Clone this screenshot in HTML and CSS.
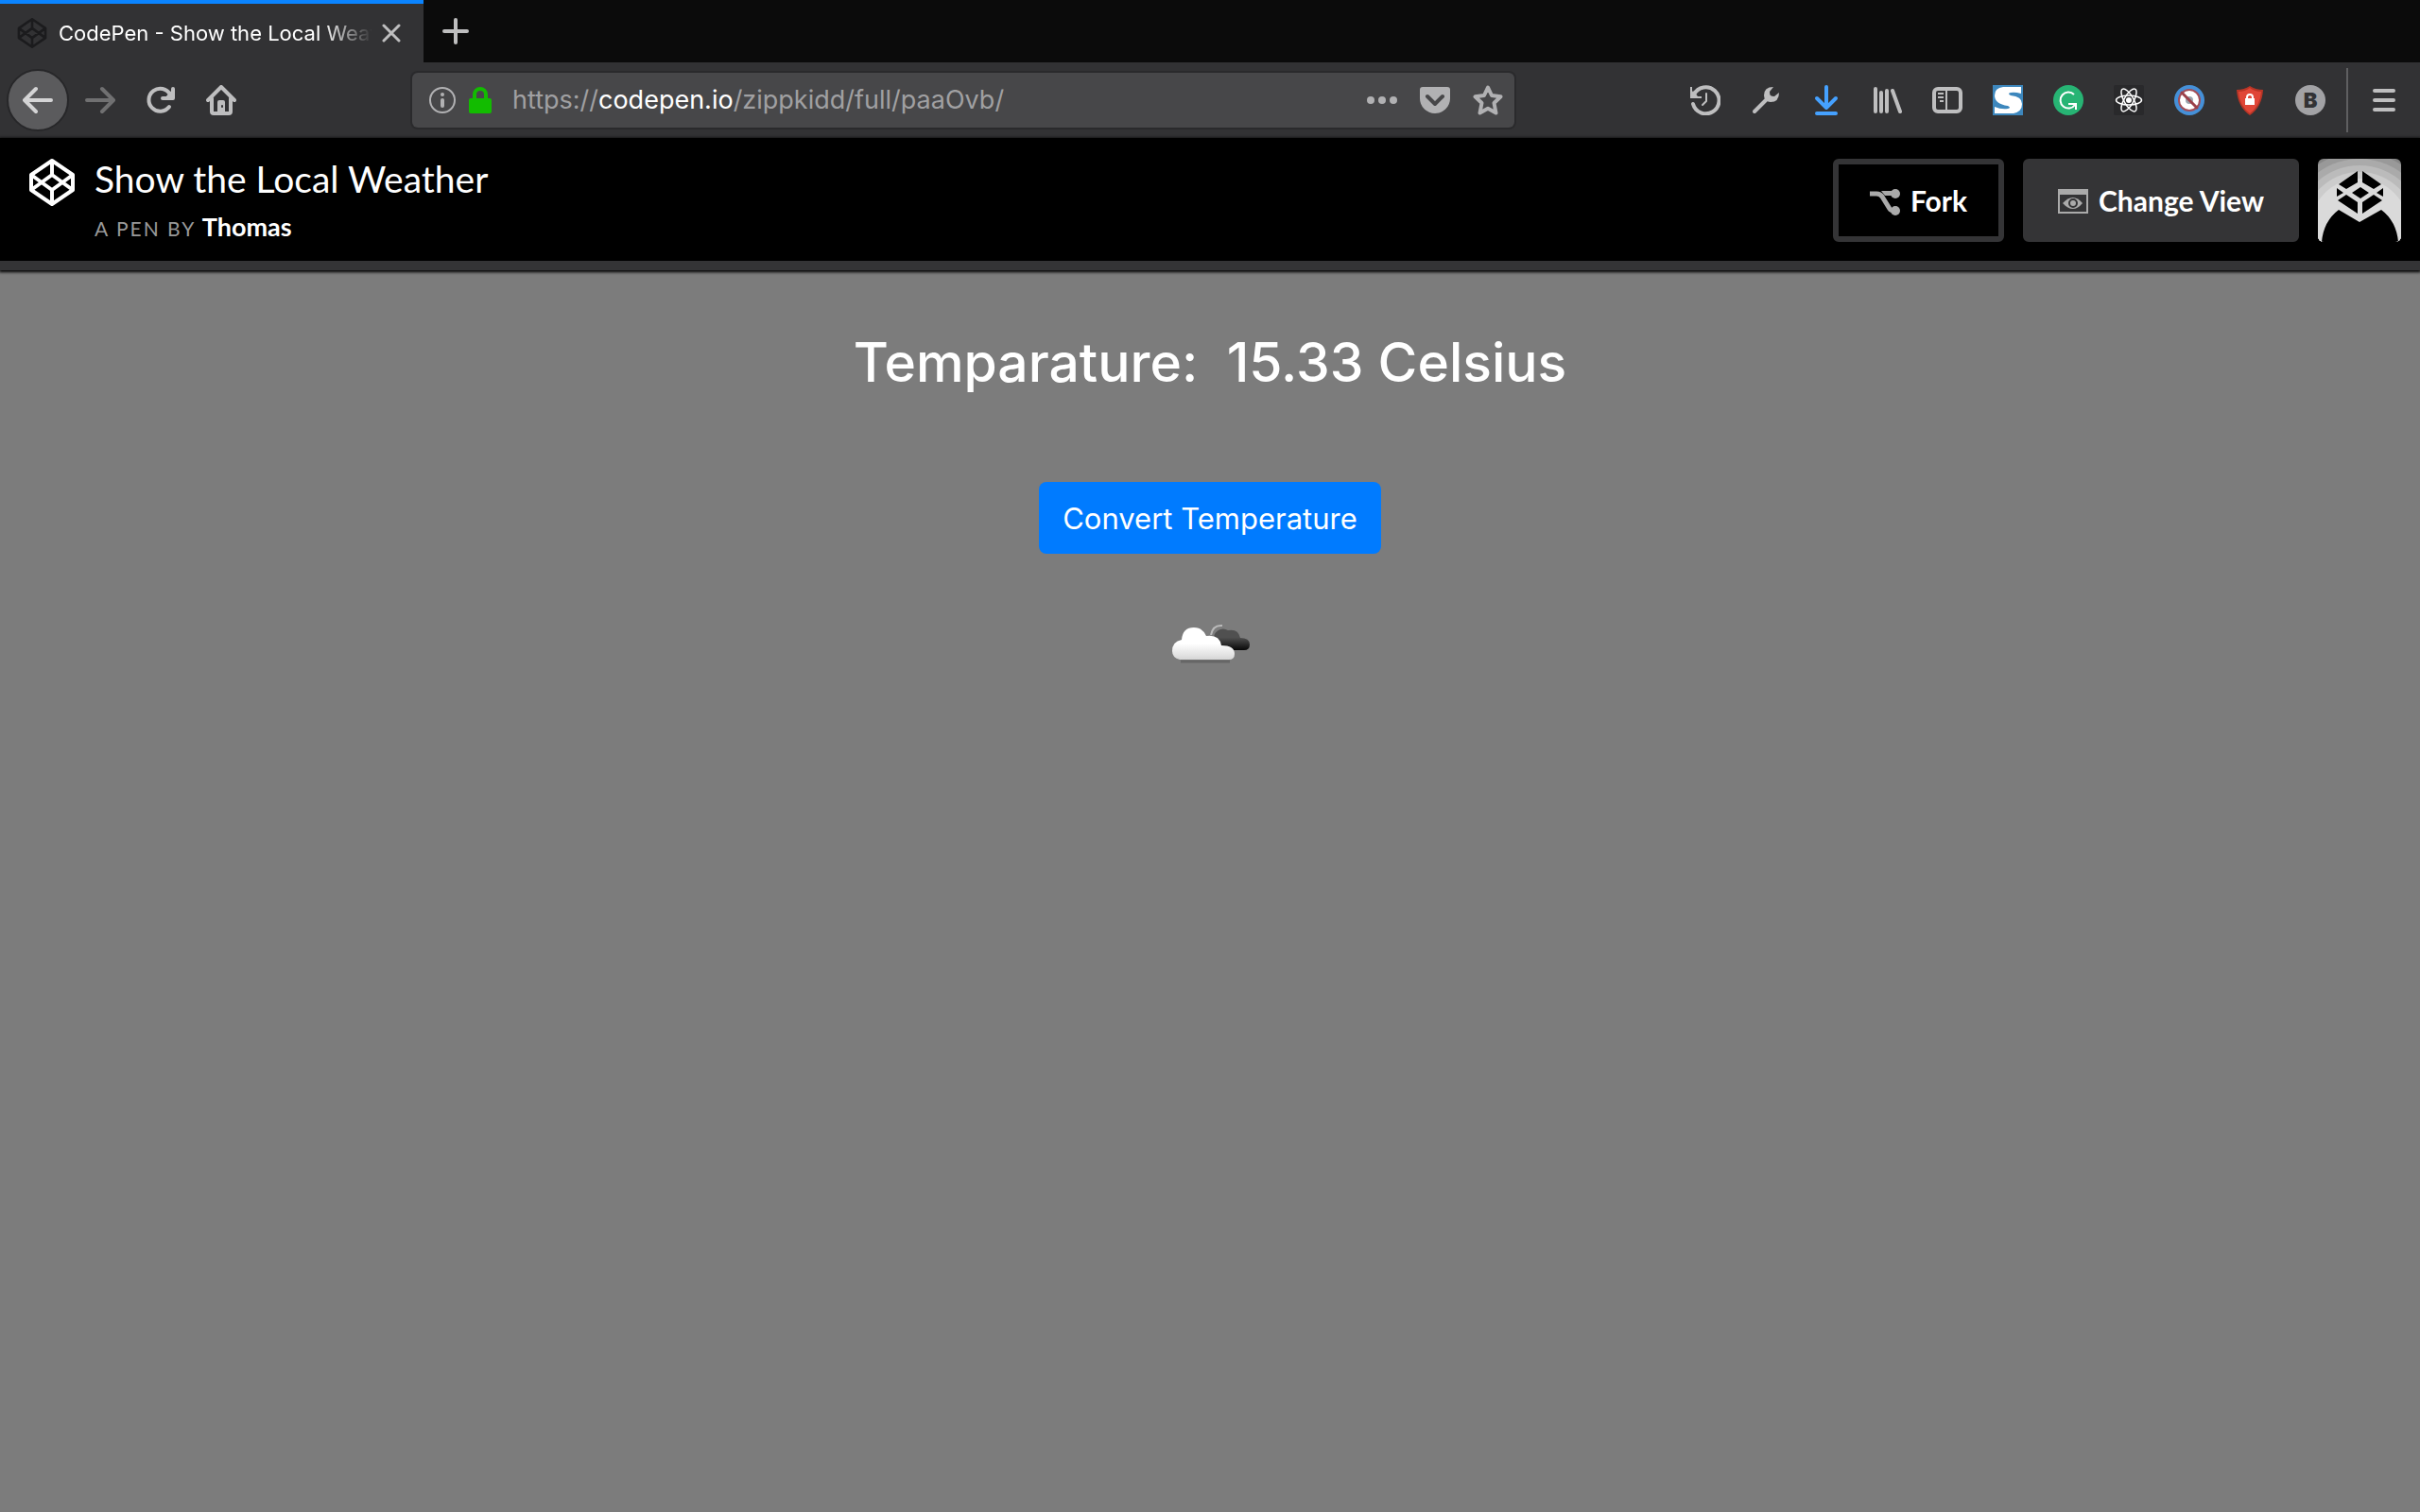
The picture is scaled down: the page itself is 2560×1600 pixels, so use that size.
FILE: index.html
```html
<!DOCTYPE html>
<html lang="en">
<head>
<meta charset="utf-8">
<title>CodePen - Show the Local Weather</title>
<link rel="stylesheet" href="styles.css">
</head>
<body>
<div class="tabs">
  <div class="tab">
    <svg class="icon favicon" viewBox="0 0 48 50"><use href="#codepen"/></svg>
    <span class="tab-title">CodePen - Show the Local Weather</span>
    <button class="plain tab-close" aria-label="Close tab"><svg class="glyph" viewBox="0 0 20 20"><path d="M2 2l16 16M18 2L2 18" stroke-width="3"/></svg></button>
  </div>
  <button class="plain new-tab" aria-label="New tab"><svg class="glyph" viewBox="0 0 28 28"><path d="M14 2v24M2 14h24" stroke-width="4"/></svg></button>
</div>

<nav class="toolbar">
  <div class="nav-buttons">
    <button class="plain back" aria-label="Back"><svg class="icon" viewBox="0 0 32 32"><path d="M30 16H3M14 4L2 16l12 12" stroke-width="4"/></svg></button>
    <button class="plain forward" aria-label="Forward"><svg class="icon" viewBox="0 0 32 32"><path d="M2 16h27M18 4l12 12-12 12" stroke-width="4"/></svg></button>
    <button class="plain" aria-label="Reload"><svg class="icon" viewBox="0 0 32 32"><path d="M25 23a12 12 0 1 1 1-13" stroke-width="4"/><path d="M29 4v10H18" stroke-width="4"/><path class="solid" d="M30 3v12H19z"/></svg></button>
    <button class="plain" aria-label="Home"><svg class="icon" viewBox="0 0 32 32"><path d="M2 16L16 2l14 14M6 14v14q0 2 2 2h16q2 0 2-2V14" stroke-width="4"/><path class="solid" d="M12 30V18q0-2 2-2h4q2 0 2 2v12z"/><path d="M17 22v1" stroke="#323234" stroke-width="2"/></svg></button>
  </div>
  <div class="space"></div>
  <div class="address">
    <svg class="icon info" viewBox="0 0 28 28"><circle cx="14" cy="14" r="13" stroke-width="2"/><path d="M14 14v6" stroke-width="4"/><circle class="solid" cx="14" cy="8" r="2"/></svg>
    <svg class="lock" viewBox="0 0 24 28"><path d="M6 13V8a6 6 0 0 1 12 0v5" fill="none" stroke="#12bc00" stroke-width="4"/><rect y="12" width="24" height="16" rx="2" fill="#12bc00"/></svg>
    <div class="url" role="textbox" aria-label="Address" contenteditable="true" spellcheck="false">https://<span class="host">codepen.io</span>/zippkidd/full/paaOvb/</div>
    <div class="address-actions">
      <svg class="icon" viewBox="0 0 32 32"><g class="solid"><circle cx="4" cy="16" r="4"/><circle cx="16" cy="16" r="4"/><circle cx="28" cy="16" r="4"/></g></svg>
      <svg class="icon" viewBox="0 0 32 32"><path class="solid" d="M3 2h26q3 0 3 3v9a16 16 0 0 1-32 0V5q0-3 3-3z"/><path d="M8 12l8 8 8-8" stroke="#474749" stroke-width="4"/></svg>
      <svg class="icon" viewBox="0 0 32 32"><path d="M16 2.5l4 8.5 9.500 1.300-7 6.700 2 10.500-8.500-4.700-8.500 4.700 2-10.500-7-6.700 9.500-1.300z" stroke-width="4"/></svg>
    </div>
  </div>
  <div class="space"></div>
  <div class="tools">
    <svg class="icon" viewBox="0 0 32 32"><path d="M3 20a14 14 0 1 0 1-10" stroke-width="4"/><path class="flat" d="M1 2v11h11" stroke-width="2"/><path class="solid" d="M0 10l3-4 5 6 4 1v1H0z"/><path d="M17 9v8l-4 4" stroke-width="2"/></svg>
    <svg class="icon" viewBox="0 0 32 32"><path d="M4 28l14-14" stroke-width="4"/><path class="solid" d="M24 2q-10 0-10 9 0 3 2 5 2 2 5 2 9 0 9-10l-5 4q-3 0-4-1t-1-4z"/></svg>
    <svg class="icon download" viewBox="0 0 32 32"><path d="M16 2v22M6 14l10 10 10-10M6 30h20" stroke-width="4"/></svg>
    <svg class="icon" viewBox="0 0 32 32"><path d="M4 4v24M10 8v20M16 6v22M22 6l8 22" stroke-width="4"/></svg>
    <svg class="icon" viewBox="0 0 32 32"><rect x="2" y="4" width="28" height="24" rx="4" stroke-width="4"/><path class="flat" d="M15 5v22M6 9h6M6 13h6M8 17h4" stroke-width="2"/></svg>
    <svg class="icon" viewBox="0 0 32 32"><rect class="none" width="32" height="32" fill="#3d87bd"/><path class="none" d="M30 2v7q-7-2-11-1-4 1 0 3 12 1 12 9 0 8-9 10H2v-7q7 3 14 2 4-1 0-3Q2 20 2 11q0-8 9-9z" fill="#fff"/></svg>
    <svg class="icon" viewBox="0 0 32 32"><circle class="none" cx="16" cy="16" r="16" fill="#27b474"/><path class="flat" d="M22 10a8.500 8.500 0 1 0 1 11M16 20h8v6" stroke="#fff" stroke-width="2"/></svg>
    <svg class="icon" viewBox="0 0 32 32"><rect class="none" width="32" height="32" rx="2" fill="#29292b"/><g stroke="#fff" stroke-width="1.500"><ellipse cx="16" cy="16" rx="13.500" ry="5"/><ellipse cx="16" cy="16" rx="13.500" ry="5" transform="rotate(60 16 16)"/><ellipse cx="16" cy="16" rx="13.500" ry="5" transform="rotate(120 16 16)"/></g><circle class="none" cx="16" cy="16" r="3" fill="#fff"/></svg>
    <svg class="icon" viewBox="0 0 32 32"><circle class="none" cx="16" cy="16" r="16" fill="#4590d8"/><circle cx="16" cy="16" r="11" fill="#fff" stroke="#a14e58" stroke-width="2"/><circle class="none" cx="16" cy="16" r="4" fill="#9aa5ae"/><path d="M8 8l16 16" stroke="#9c3f49" stroke-width="3"/></svg>
    <svg class="icon" viewBox="0 0 32 32"><path class="none" d="M16 1q6 4 14 4-1 18-14 27Q3 23 2 5q8 0 14-4z" fill="#b93526"/><path class="none" d="M16 3q5 4 12 4-1 15-12 23Q5 22 4 7q7 0 12-4z" fill="#e04637"/><path d="M13 15v-2a3 3 0 0 1 6 0v2" stroke="#fff" stroke-width="2"/><rect class="none" x="11" y="14" width="10" height="7" fill="#fff"/></svg>
    <span class="badge">B</span>
  </div>
  <div class="menu-area"><button class="plain" aria-label="Menu"><svg class="icon" viewBox="0 0 32 32"><path d="M6 6h20M6 16h20M6 26h20" stroke-width="4"/></svg></button></div>
</nav>

<header class="pen-header">
  <a class="logo" href="#" aria-label="CodePen"><svg viewBox="0 0 48 50"><g id="codepen" fill="none" stroke="currentColor" stroke-width="4" stroke-linejoin="round"><path d="M24 2L46 17v16L24 48 2 33V17zM24 2v15M24 33v15M2 17l22 16 22-16M2 33l22-16 22 16"/></g></svg></a>
  <div class="pen-info">
    <h1 class="pen-title">Show the Local Weather</h1>
    <div class="byline">A PEN BY <a href="#" class="author">Thomas</a></div>
  </div>
  <div class="pen-actions">
    <button class="action fork"><svg viewBox="0 -4 32 32"><path d="M0 5h7q4 0 6 3l8 13q1 2 5 2" fill="none" stroke="#aaa" stroke-width="5"/><path d="M12 2l4 5h10V2z" fill="#aaa"/><circle cx="27" cy="5" r="5" fill="#aaa"/><circle cx="27" cy="23" r="5" fill="#aaa"/></svg>Fork</button>
    <button class="action view"><svg viewBox="0 -4 32 32"><path d="M1 1h30v24H1z" fill="none" stroke="#aaa" stroke-width="2"/><path d="M0 0h32v6H0z" fill="#aaa"/><path d="M5 15q11-12 21 0-10 12-21 0z" fill="#aaa"/><circle cx="16" cy="15" r="4" fill="none" stroke="#343436" stroke-width="2"/></svg>Change View</button>
    <a class="avatar" href="#" aria-label="Profile"><svg viewBox="0 0 88 88"><rect width="88" height="88" fill="#868686"/><circle cx="44" cy="73" r="80" fill="#999"/><circle cx="44" cy="73" r="73" fill="#aaa"/><circle cx="44" cy="73" r="66" fill="#bbb"/><circle cx="44" cy="73" r="59" fill="#ccc"/><circle cx="44" cy="73" r="52" fill="#dadada"/><path d="M4 88Q6 66 22 54l22 13 23-13q16 12 18 34z"/><path d="M42 13v12l-12 7-8-5zM47 13v12l12 7 8-5zM20 31l7 5-7 4zM69 31l-7 5 7 4zM45 30l9 6-9 6-9-6zM30 38l12 8v12L21 44zM59 38l-12 8v12l21-14z"/></svg></a>
  </div>
</header>

<main class="weather">
  <h2 class="temperature">Temparature: &nbsp;15.33 Celsius</h2>
  <button class="convert">Convert Temperature</button>
  <svg class="cloud" viewBox="-4 0 88 44" role="img" aria-label="Cloudy">
    <defs><linearGradient id="light" x2="0" y2="1"><stop offset=".5" stop-color="#fff"/><stop offset="1" stop-color="#d6d6d6"/></linearGradient><linearGradient id="dark" x2="0" y2="1"><stop offset=".4" stop-color="#505050"/><stop offset="1" stop-color="#080808"/></linearGradient></defs>
    <path d="M41 12q2-11 12-10" fill="none" stroke="#bbb" stroke-width="2"/>
    <path d="M44 17a10 10 0 0 1 15-10q11-2 13 8 10 0 10 7 0 6-6 6H58z" fill="url(#dark)"/>
    <path d="M9 40h52" stroke="#666" stroke-width="3"/>
    <path d="M8 38q-8-2-8-9 0-10 10-12Q11 4 23 4q9 0 13 9 14-2 16 10 14 0 14 9 0 6-6 6z" fill="url(#light)"/>
  </svg>
</main>
</body>
</html>
```
FILE: styles.css
```css
* { box-sizing: border-box; }
body { margin: 0; min-height: 100vh; background: #7c7c7c; color: #fff; font-family: Inter, "Liberation Sans", sans-serif; }
svg { display: block; flex: none; }
button { font-family: inherit; color: inherit; cursor: pointer; }
a { color: inherit; text-decoration: none; }
.plain { display: flex; align-items: center; justify-content: center; padding: 0; border: 0; background: none; flex: none; }
.icon, .glyph { width: 32px; height: 32px; fill: none; stroke: #bebebf; stroke-linecap: round; stroke-linejoin: round; }
.solid { fill: #bebebf; stroke: none; }
.none { stroke: none; }
.flat { stroke-linecap: butt; stroke-linejoin: miter; }

.tabs { display: flex; height: 66px; background: #0b0b0b; }
.tab { display: flex; align-items: center; width: 448px; padding: 0 24px 0 18px; border-top: 4px solid #0a84ff; background: #323234; }
.favicon { color: #1b1b1d; }
.tab-title { flex: 1; min-width: 0; margin: 0 10px 0 12px; overflow: hidden; white-space: nowrap; font-size: 22px; line-height: 32px; mask-image: linear-gradient(to right, #000 84%, transparent); }
.tab-close .glyph { width: 20px; height: 20px; }
.new-tab { width: 68px; }
.new-tab .glyph { width: 28px; height: 28px; }

.toolbar { display: flex; align-items: center; height: 80px; padding: 0 22px 0 7px; background: #323234; }
.nav-buttons { display: flex; align-items: center; gap: 32px; }
.back { width: 66px; height: 66px; margin-right: -15px; border: 2px solid #272729; border-radius: 50%; background: #5b5b5d; }
.back .icon { stroke: #d4d4d5; }
.forward .icon { stroke: #707071; }
.space { flex: 186; }
.address { flex: 1136; display: flex; align-items: center; height: 58px; padding: 0 12px 0 18px; border-radius: 6px; background: #474749; box-shadow: 0 0 0 2px #2a2a2c; }
.address .icon { stroke: #b1b1b3; }
.address .solid { fill: #b1b1b3; }
.address .info { width: 28px; height: 28px; }
.lock { width: 24px; height: 28px; margin: 0 22px 0 14px; }
.url { flex: 1; min-width: 0; white-space: nowrap; overflow: hidden; font-size: 27px; line-height: 40px; color: #a0a0a2; outline: 0; }
.host { color: #fff; }
.address-actions { display: flex; gap: 24px; }
.tools { display: flex; gap: 32px; }
.download { stroke: #45a1ff; }
.badge { width: 32px; height: 32px; border-radius: 50%; background: #a2a2a5; color: #323234; font-size: 22px; font-weight: 900; line-height: 32px; text-align: center; }
.menu-area { display: flex; align-items: center; height: 68px; margin-left: 22px; padding-left: 22px; border-left: 2px solid #5f5f61; }

.pen-header { display: flex; height: 140px; padding: 22px 20px 0 30px; border-bottom: 10px solid #343436; background: #000; box-shadow: 0 1px 3px 1px #000; font-family: Lato, sans-serif; }
.logo svg { width: 50px; height: 50px; }
.pen-info { flex: 1; margin-left: 20px; }
.pen-title { margin: 0; font-size: 39px; font-weight: 400; line-height: 42px; }
.byline { margin-top: 12px; font-size: 21px; line-height: 36px; letter-spacing: 2px; color: #999; }
.author { font-size: 27px; font-weight: 700; letter-spacing: 0; color: #fff; }
.pen-actions { display: flex; gap: 20px; }
.action { display: flex; align-items: center; gap: 11px; height: 88px; padding: 0 31px; border: 6px solid #343436; border-radius: 6px; background: #343436; font-size: 30px; font-weight: 700; }
.action svg { width: 32px; height: 32px; }
.fork { padding: 0 33px; background: #000; }
.avatar svg { width: 88px; height: 88px; border-radius: 6px; }

.weather { display: flex; flex-direction: column; align-items: center; padding-top: 60px; }
.temperature { margin: 0; font-size: 57px; font-weight: 500; line-height: 76px; }
.convert { height: 76px; margin: 88px 0 74px; padding: 0 25px; border: 0; border-radius: 8px; background: #007bff; font-size: 31px; }
.cloud { width: 88px; height: 44px; }
```
